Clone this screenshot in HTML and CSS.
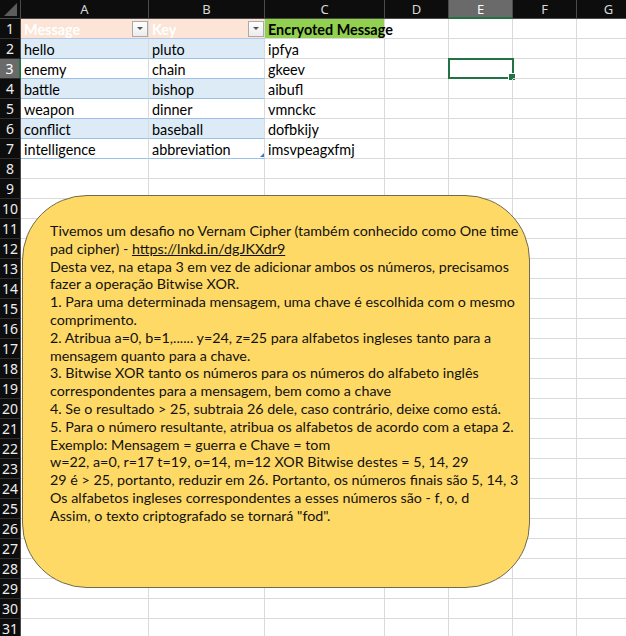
FILE: index.html
```html
<!DOCTYPE html>
<html lang="pt">
<head>
<meta charset="utf-8">
<title>Vernam Cipher</title>
<link rel="stylesheet" href="styles.css">
</head>
<body>
<div class="app">
  <div class="sheet">
    <div class="corner"><span class="tri"></span></div>
    <div class="ch">A</div><div class="ch">B</div><div class="ch">C</div><div class="ch">D</div><div class="ch active">E</div><div class="ch">F</div><div class="ch">G</div>

    <div class="rh">1</div>
    <div class="c thead"><span>Message</span><span class="filter"></span></div>
    <div class="c thead"><span>Key</span><span class="filter"></span></div>
    <div class="c green">Encryoted Message</div>
    <div class="c"></div><div class="c"></div><div class="c"></div><div class="c"></div>

    <div class="rh">2</div>
    <div class="c band">hello</div><div class="c band">pluto</div><div class="c">ipfya</div>
    <div class="c"></div><div class="c"></div><div class="c"></div><div class="c"></div>

    <div class="rh active">3</div>
    <div class="c trow">enemy</div><div class="c trow">chain</div><div class="c">gkeev</div>
    <div class="c"></div><div class="c sel"></div><div class="c"></div><div class="c"></div>

    <div class="rh">4</div>
    <div class="c band">battle</div><div class="c band">bishop</div><div class="c">aibufl</div>
    <div class="c"></div><div class="c"></div><div class="c"></div><div class="c"></div>

    <div class="rh">5</div>
    <div class="c trow">weapon</div><div class="c trow">dinner</div><div class="c">vmnckc</div>
    <div class="c"></div><div class="c"></div><div class="c"></div><div class="c"></div>

    <div class="rh">6</div>
    <div class="c band">conflict</div><div class="c band">baseball</div><div class="c">dofbkijy</div>
    <div class="c"></div><div class="c"></div><div class="c"></div><div class="c"></div>

    <div class="rh">7</div>
    <div class="c trow">intelligence</div><div class="c trow resize">abbreviation</div><div class="c">imsvpeagxfmj</div>
    <div class="c"></div><div class="c"></div><div class="c"></div><div class="c"></div>

    <div class="rh">8</div><div class="c"></div><div class="c"></div><div class="c"></div><div class="c"></div><div class="c"></div><div class="c"></div><div class="c"></div>
    <div class="rh">9</div><div class="c"></div><div class="c"></div><div class="c"></div><div class="c"></div><div class="c"></div><div class="c"></div><div class="c"></div>
    <div class="rh">10</div><div class="c"></div><div class="c"></div><div class="c"></div><div class="c"></div><div class="c"></div><div class="c"></div><div class="c"></div>
    <div class="rh">11</div><div class="c"></div><div class="c"></div><div class="c"></div><div class="c"></div><div class="c"></div><div class="c"></div><div class="c"></div>
    <div class="rh">12</div><div class="c"></div><div class="c"></div><div class="c"></div><div class="c"></div><div class="c"></div><div class="c"></div><div class="c"></div>
    <div class="rh">13</div><div class="c"></div><div class="c"></div><div class="c"></div><div class="c"></div><div class="c"></div><div class="c"></div><div class="c"></div>
    <div class="rh">14</div><div class="c"></div><div class="c"></div><div class="c"></div><div class="c"></div><div class="c"></div><div class="c"></div><div class="c"></div>
    <div class="rh">15</div><div class="c"></div><div class="c"></div><div class="c"></div><div class="c"></div><div class="c"></div><div class="c"></div><div class="c"></div>
    <div class="rh">16</div><div class="c"></div><div class="c"></div><div class="c"></div><div class="c"></div><div class="c"></div><div class="c"></div><div class="c"></div>
    <div class="rh">17</div><div class="c"></div><div class="c"></div><div class="c"></div><div class="c"></div><div class="c"></div><div class="c"></div><div class="c"></div>
    <div class="rh">18</div><div class="c"></div><div class="c"></div><div class="c"></div><div class="c"></div><div class="c"></div><div class="c"></div><div class="c"></div>
    <div class="rh">19</div><div class="c"></div><div class="c"></div><div class="c"></div><div class="c"></div><div class="c"></div><div class="c"></div><div class="c"></div>
    <div class="rh">20</div><div class="c"></div><div class="c"></div><div class="c"></div><div class="c"></div><div class="c"></div><div class="c"></div><div class="c"></div>
    <div class="rh">21</div><div class="c"></div><div class="c"></div><div class="c"></div><div class="c"></div><div class="c"></div><div class="c"></div><div class="c"></div>
    <div class="rh">22</div><div class="c"></div><div class="c"></div><div class="c"></div><div class="c"></div><div class="c"></div><div class="c"></div><div class="c"></div>
    <div class="rh">23</div><div class="c"></div><div class="c"></div><div class="c"></div><div class="c"></div><div class="c"></div><div class="c"></div><div class="c"></div>
    <div class="rh">24</div><div class="c"></div><div class="c"></div><div class="c"></div><div class="c"></div><div class="c"></div><div class="c"></div><div class="c"></div>
    <div class="rh">25</div><div class="c"></div><div class="c"></div><div class="c"></div><div class="c"></div><div class="c"></div><div class="c"></div><div class="c"></div>
    <div class="rh">26</div><div class="c"></div><div class="c"></div><div class="c"></div><div class="c"></div><div class="c"></div><div class="c"></div><div class="c"></div>
    <div class="rh">27</div><div class="c"></div><div class="c"></div><div class="c"></div><div class="c"></div><div class="c"></div><div class="c"></div><div class="c"></div>
    <div class="rh">28</div><div class="c"></div><div class="c"></div><div class="c"></div><div class="c"></div><div class="c"></div><div class="c"></div><div class="c"></div>
    <div class="rh">29</div><div class="c"></div><div class="c"></div><div class="c"></div><div class="c"></div><div class="c"></div><div class="c"></div><div class="c"></div>
    <div class="rh">30</div><div class="c"></div><div class="c"></div><div class="c"></div><div class="c"></div><div class="c"></div><div class="c"></div><div class="c"></div>
    <div class="rh">31</div><div class="c"></div><div class="c"></div><div class="c"></div><div class="c"></div><div class="c"></div><div class="c"></div><div class="c"></div>
  </div>

  <div class="shape">
    <p class="note">Tivemos um desafio no Vernam Cipher (também conhecido como One time<br>pad cipher) - <u>https://lnkd.in/dgJKXdr9</u><br>Desta vez, na etapa 3 em vez de adicionar ambos os números, precisamos<br>fazer a operação Bitwise XOR.<br>1. Para uma determinada mensagem, uma chave é escolhida com o mesmo<br>comprimento.<br>2. Atribua a=0, b=1,...... y=24, z=25 para alfabetos ingleses tanto para a<br>mensagem quanto para a chave.<br>3. Bitwise XOR tanto os números para os números do alfabeto inglês<br>correspondentes para a mensagem, bem como a chave<br>4. Se o resultado &gt; 25, subtraia 26 dele, caso contrário, deixe como está.<br>5. Para o número resultante, atribua os alfabetos de acordo com a etapa 2.<br>Exemplo: Mensagem = guerra e Chave = tom<br>w=22, a=0, r=17 t=19, o=14, m=12 XOR Bitwise destes = 5, 14, 29<br>29 é &gt; 25, portanto, reduzir em 26. Portanto, os números finais são 5, 14, 3<br>Os alfabetos ingleses correspondentes a esses números são - f, o, d<br>Assim, o texto criptografado se tornará "fod".</p>
  </div>
</div>
</body>
</html>
```

FILE: styles.css
```css
* { box-sizing: border-box; }
html, body { margin: 0; padding: 0; background: #ffffff; }

.app {
  position: relative;
  width: 626px;
  height: 636px;
  overflow: hidden;
  background: #ffffff;
  font-family: Lato, "Liberation Sans", sans-serif;
}

.sheet {
  display: grid;
  grid-template-columns: 21px 128px 116px 120px 64px 64px 64px 64px;
  grid-template-rows: 19px;
  grid-auto-rows: 20px;
  width: 641px;
}

.corner {
  background: #0d0d0d;
  border-right: 1px solid #4a4a4a;
  border-bottom: 1px solid #4a4a4a;
  position: relative;
}
.corner .tri {
  position: absolute;
  right: 3px;
  bottom: 2px;
  width: 0;
  height: 0;
  border-left: 13px solid transparent;
  border-bottom: 13px solid #5c5c5c;
}

.ch {
  background: #0d0d0d;
  color: #d8d8d8;
  font-family: "Noto Sans", sans-serif;
  font-size: 13px;
  line-height: 19px;
  text-align: center;
  border-right: 1px solid #4a4a4a;
  border-bottom: 1px solid #4a4a4a;
}
.ch.active {
  background: #6a6a6a;
  color: #ffffff;
  border-bottom: 2px solid #217346;
  line-height: 18px;
}

.rh {
  background: #0d0d0d;
  color: #eeeeee;
  font-family: "Noto Sans", sans-serif;
  font-size: 14px;
  line-height: 19px;
  text-align: center;
  border-right: 1px solid #4a4a4a;
  border-bottom: 1px solid #2e2e2e;
}
.rh.active {
  background: #6a6a6a;
  color: #ffffff;
  border-right: 2px solid #217346;
}

.c {
  border-right: 1px solid #dadada;
  border-bottom: 1px solid #dadada;
  padding: 2px 3px 0 3px;
  font-size: 14.4px;
  line-height: 18px;
  color: #000000;
  white-space: nowrap;
  position: relative;
}

.thead {
  background: #fce4d6;
  color: #ffffff;
  font-weight: bold;
  border-bottom-color: #b4c6e7;
  display: flex;
  justify-content: space-between;
  align-items: center;
  padding: 0 0 0 3px;
}
.thead > span:first-child { padding-top: 2px; }
.filter {
  width: 16px;
  height: 16px;
  border: 1px solid #a9a9a9;
  background: linear-gradient(#fefefe, #ececec);
  display: flex;
  align-items: center;
  justify-content: center;
}
.filter::before {
  content: "";
  width: 0;
  height: 0;
  border-left: 3px solid transparent;
  border-right: 3px solid transparent;
  border-top: 3px solid #555555;
}

.green {
  background: #92d050;
  font-weight: bold;
  overflow: visible;
  z-index: 1;
}

.band {
  background: #ddebf7;
  border-bottom-color: #9bc2e6;
}
.trow {
  border-bottom-color: #9bc2e6;
}

.resize::after {
  content: "";
  position: absolute;
  right: 0;
  bottom: 1px;
  width: 0;
  height: 0;
  border-left: 4px solid transparent;
  border-bottom: 4px solid #3c78c8;
}

.sel::before {
  content: "";
  position: absolute;
  left: -1px;
  top: -1px;
  right: -2px;
  bottom: -1px;
  border: 2px solid #217346;
}
.sel::after {
  content: "";
  position: absolute;
  right: -4px;
  bottom: -3px;
  width: 6px;
  height: 6px;
  background: #217346;
  border: 1px solid #ffffff;
}

.shape {
  position: absolute;
  left: 22px;
  top: 195px;
  width: 508px;
  height: 393px;
  border: 1px solid #6f6b50;
  border-radius: 65px;
  background: #ffd966;
  padding: 26px 0 0 27px;
  z-index: 3;
}
.note {
  margin: 0;
  font-size: 14.3px;
  line-height: 17.8px;
  color: #111111;
  white-space: nowrap;
}
```
